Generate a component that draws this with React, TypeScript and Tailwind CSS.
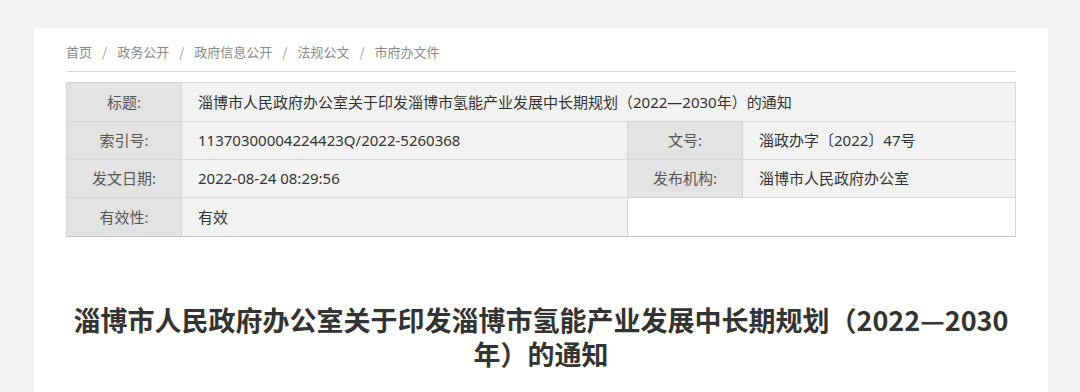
const crumbs = ['首页', '政务公开', '政府信息公开', '法规公文', '市府办文件'];

const Label = ({ children }: { children: React.ReactNode }) => (
    <div className="flex items-center justify-center bg-[#e3e3e3] text-[#555] border-r border-[#d6d6d6]">
        {children}
    </div>
);

const Value = ({ children, last }: { children?: React.ReactNode; last?: boolean }) => (
    <div className={`flex items-center pl-4 bg-[#f2f2f2] text-[#333] ${last ? '' : 'border-r border-[#d6d6d6]'}`}>
        {children}
    </div>
);

export default function App() {
    return (
        <div
            className="w-[1080px] h-[392px] overflow-hidden bg-[#f1f1f1] pt-7 pl-[34px]"
            style={{ fontFamily: '"Microsoft YaHei", "Noto Sans CJK SC", "Noto Sans", sans-serif' }}
        >
            <div className="w-[1014px] h-[400px] bg-white px-8">
                {/* Breadcrumb */}
                <div className="h-[44px] flex items-center gap-[10px] text-[13px] text-[#8a8a8a] border-b border-[#d8d8d8] pt-[4px]">
                    {crumbs.map((c, i) => (
                        <span key={c} className="flex items-center gap-[10px]">
                            {i > 0 && <span className="text-[#999]">/</span>}
                            <span>{c}</span>
                        </span>
                    ))}
                </div>

                {/* Meta table */}
                <div className="mt-[10px] border border-[#d6d6d6] border-b-[#c4c4c4] text-[15px] font-['Noto_Sans','Noto_Sans_CJK_SC',sans-serif]">
                    <div className="grid grid-cols-[115px_1fr] h-[39px] border-b border-[#d6d6d6]">
                        <Label>标题:</Label>
                        <Value last>淄博市人民政府办公室关于印发淄博市氢能产业发展中长期规划（2022—2030年）的通知</Value>
                    </div>
                    <div className="grid grid-cols-[115px_446px_115px_1fr] h-[38px] border-b border-[#d6d6d6]">
                        <Label>索引号:</Label>
                        <Value>11370300004224423Q/2022-5260368</Value>
                        <Label>文号:</Label>
                        <Value last>淄政办字〔2022〕47号</Value>
                    </div>
                    <div className="grid grid-cols-[115px_446px_115px_1fr] h-[38px] border-b border-[#d6d6d6]">
                        <Label>发文日期:</Label>
                        <Value>2022-08-24 08:29:56</Value>
                        <Label>发布机构:</Label>
                        <Value last>淄博市人民政府办公室</Value>
                    </div>
                    <div className="grid grid-cols-[115px_446px_1fr] h-[38px]">
                        <Label>有效性:</Label>
                        <Value>有效</Value>
                        <div className="bg-white" />
                    </div>
                </div>

                {/* Heading */}
                <h1 className="mt-[66px] text-center text-[27px] leading-[34px] font-bold text-[#333]">
                    淄博市人民政府办公室关于印发淄博市氢能产业发展中长期规划（2022—2030年）的通知
                </h1>
            </div>
        </div>
    );
}
